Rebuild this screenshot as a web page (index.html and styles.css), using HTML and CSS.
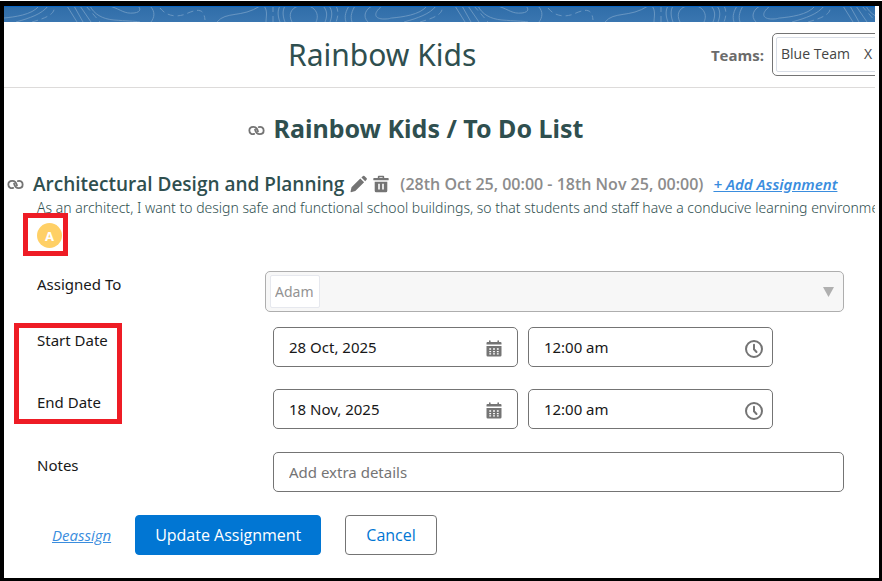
FILE: index.html
```html
<!DOCTYPE html>
<html lang="en">
<head>
<meta charset="utf-8">
<title>Rainbow Kids / To Do List</title>
<link rel="stylesheet" href="styles.css">
</head>
<body>
<svg width="0" height="0" class="defs" aria-hidden="true">
  <symbol id="link" viewBox="0 0 18 12">
    <g fill="none" stroke="#747474" stroke-width="2" stroke-linecap="round">
      <path d="M6.500 9.800C3.500 10.600 1.200 8.800 1.200 6 1.200 3.500 3 2 5.500 2 8.300 2 9.800 3.800 10.600 7"/>
      <path d="M11.500 2.200C14.500 1.400 16.800 3.200 16.800 6 16.800 8.500 15 10 12.500 10 9.700 10 8.200 8.200 7.400 5"/>
    </g>
  </symbol>
  <symbol id="pencil" viewBox="0 0 18 18">
    <path fill="#747474" d="M1.500 12.300 10.300 3.500 14.100 7.300 5.300 16.100 1 17.200Q.5 17.200.6 16.600ZM11.400 2.400 13 .9Q13.700.4 14.400.9L16.700 3.200Q17.200 3.900 16.700 4.600L15.200 6.200Z"/>
  </symbol>
  <symbol id="trash" viewBox="0 0 16 18">
    <path fill="#747474" fill-rule="evenodd" d="M1 3h3.800V1.800Q4.800.8 5.800.8h4.400q1 0 1 1V3H15q.7 0 .7.7v1q0 .6-.7.6H1q-.7 0-.7-.6v-1Q.3 3 1 3ZM6.400 2.300V3h3.200v-.7ZM1.700 6.700h12.600v9q0 1.500-1.500 1.500H3.200q-1.500 0-1.500-1.500ZM5.200 8.800v5.600h1.600V8.800ZM9.200 8.800v5.600h1.600V8.800Z"/>
  </symbol>
  <symbol id="calendar" viewBox="0 0 16 17">
    <path fill="#747474" fill-rule="evenodd" d="M1.500 2H3V1Q3 .3 3.800.3T4.600 1v1h6.800V1q0-.7.8-.7T13 1v1h1.500q1 0 1 1v1.500H.5V3q0-1 1-1ZM.5 5.900h15v9.300q0 1.300-1.300 1.300H1.800Q.5 16.500.5 15.200ZM3.300 8.300v1.500h1.800V8.300Zm3.800 0v1.500h1.800V8.300Zm3.800 0v1.500h1.800V8.300Zm-7.600 2.600v1.300h1.800v-1.300Zm3.800 0v1.300h1.800v-1.300Zm3.800 0v1.300h1.800v-1.300Zm-7.600 2.400v1.300h1.800v-1.300Zm3.800 0v1.300h1.800v-1.300Zm3.800 0v1.300h1.800v-1.300Z"/>
  </symbol>
  <symbol id="clock" viewBox="0 0 18 18">
    <circle cx="9" cy="9" r="8" fill="none" stroke="#747474" stroke-width="2"/>
    <path d="M9 4.800V9.300L11.500 12" fill="none" stroke="#747474" stroke-width="2" stroke-linecap="round"/>
  </symbol>
</svg>

<div class="frame">
  <svg class="banner" aria-hidden="true">
    <defs>
      <linearGradient id="sky" x1="0" y1="0" x2="0" y2="1">
        <stop offset="0" stop-color="#2f6da8"/><stop offset="1" stop-color="#3a76b0"/>
      </linearGradient>
      <pattern id="topo" width="388" height="16" patternUnits="userSpaceOnUse">
        <g fill="none" stroke="#6795c1" stroke-width="1">
          <path d="M0 12C10 11 28 9 35 0M12 16C26 12 38 8 44 0M63 0 73 16M70 0 79 16M76 0 87 16M86 0C90 8 98 13 110 14S130 15 136 16M106 0C118 4 120 8 130 7 138 6 136 2 134 0M146 0C152 6 150 12 147 16M213 16C222 5 238 12 256 0M260 0C264 5 262 11 262 16M276 0C273 5 274 11 276 16M281 0C278 5 279 11 281 16M288 16C280 0 302-5 310 3 314 7 314 12 312 16M319 0C324 5 323 11 321 16M325 0C329 5 328 11 326 16M364 16C358 10 362 3 368 0M378 0C368 8 371 13 380 13 386 13 386 12 388 12"/>
          <path stroke-dasharray="6 4" d="M28 16C42 12 52 8 50 0M82 0 96 16M156 2C164 12 176 11 184 7 196 2 200 4 201 14M269 0V16M332 0C335 5 334 11 332 16"/>
          <path d="M342 16C340 10 342 5 345 0M348 16C346 10 348 5 351 0"/>
        </g>
      </pattern>
    </defs>
    <rect width="100%" height="100%" fill="url(#sky)"/>
    <rect width="100%" height="100%" fill="url(#topo)"/>
    <rect width="100%" height="1" fill="#0866c6"/>
  </svg>

  <header class="header">
    <h1 class="site-title">Rainbow Kids</h1>
    <div class="teams">
      <span class="teams-label">Teams:</span>
      <div class="teams-box">
        <div class="team-chip">Blue Team <button type="button" class="chip-remove" aria-label="Remove Blue Team">X</button></div>
      </div>
    </div>
  </header>

  <main class="main">
    <h2 class="page-title"><svg class="icon-link"><use href="#link"/></svg>Rainbow Kids / To Do List</h2>

    <section class="task">
      <div class="task-head">
        <svg class="icon-link"><use href="#link"/></svg>
        <h3 class="task-title">Architectural Design and Planning</h3>
        <button type="button" class="icon-button" aria-label="Edit"><svg width="18" height="18"><use href="#pencil"/></svg></button>
        <button type="button" class="icon-button" aria-label="Delete"><svg width="16" height="18"><use href="#trash"/></svg></button>
        <span class="task-dates">(28th Oct 25, 00:00 - 18th Nov 25, 00:00)</span>
        <a class="add-link" href="#">+ Add Assignment</a>
      </div>
      <p class="task-text">As an architect, I want to design safe and functional school buildings, so that students and staff have a conducive learning environment.</p>
      <div class="assignee"><span class="avatar">A</span><span class="mark mark-avatar"></span></div>
    </section>

    <form class="form">
      <div class="row row-assigned">
        <label for="assigned">Assigned To</label>
        <div class="picker">
          <span class="picker-chip"></span>
          <select id="assigned" disabled><option>Adam</option></select>
          <svg class="picker-arrow" viewBox="0 0 11 10"><path d="M0 0H11L5.500 10Z" fill="#b0b0b0"/></svg>
        </div>
      </div>
      <div class="dates">
        <div class="row">
          <label for="start">Start Date</label>
          <div class="pair">
            <div class="field"><input id="start" type="text" value="28 Oct, 2025"><svg width="16" height="17"><use href="#calendar"/></svg></div>
            <div class="field"><input type="text" value="12:00 am" aria-label="Start time"><svg width="18" height="18"><use href="#clock"/></svg></div>
          </div>
        </div>
        <div class="row">
          <label for="end">End Date</label>
          <div class="pair">
            <div class="field"><input id="end" type="text" value="18 Nov, 2025"><svg width="16" height="17"><use href="#calendar"/></svg></div>
            <div class="field"><input type="text" value="12:00 am" aria-label="End time"><svg width="18" height="18"><use href="#clock"/></svg></div>
          </div>
        </div>
        <span class="mark mark-dates"></span>
      </div>
      <div class="row">
        <label for="notes">Notes</label>
        <div class="field"><input id="notes" type="text" placeholder="Add extra details"></div>
      </div>
      <div class="actions">
        <a class="deassign" href="#">Deassign</a>
        <button type="button" class="button primary">Update Assignment</button>
        <button type="button" class="button">Cancel</button>
      </div>
    </form>
  </main>
</div>
</body>
</html>
```

FILE: styles.css
```css
* { box-sizing: border-box; }

body {
  margin: 0;
  padding-top: 1px;
  background: #fff;
  font: 15px/20px "Noto Sans", "Open Sans", sans-serif;
  color: #181818;
}

button, input, select { font: inherit; color: inherit; margin: 0; }
h1, h2, h3, p { margin: 0; }
.defs { position: absolute; }

.frame {
  min-height: calc(100vh - 1px);
  padding-right: 4px;
  border: solid #000;
  border-width: 5px 3px 3px 4px;
  overflow: hidden;
}

.banner { display: block; width: 100%; height: 16px; }

.header {
  display: flex;
  align-items: center;
  height: 66px;
  padding-left: 284px;
  border-bottom: 1px solid #dddbda;
  overflow: hidden;
}

.site-title { font-size: 30px; line-height: 40px; font-weight: 400; color: #2f4f4f; white-space: nowrap; }

.teams { display: flex; align-items: center; gap: 8px; margin-left: auto; margin-right: -16px; }
.teams-label { font-family: "Open Sans", sans-serif; font-weight: 700; color: #6b6b6b; }
.teams-box { width: 119px; padding: 3px; border: 1px solid #747474; border-radius: 5px; }
.team-chip {
  display: flex;
  justify-content: space-between;
  align-items: center;
  height: 35px;
  padding: 0 14px 2px 4px;
  border: 1px solid #d8dde6;
  border-radius: 2px;
  color: #444;
  font-family: "Open Sans", sans-serif;
  font-size: 14px;
  white-space: nowrap;
}
.chip-remove { padding: 0; border: 0; background: none; }

.main { padding-right: 31px; }

.icon-link { flex: none; width: 17px; height: 11px; }

.page-title {
  display: flex;
  align-items: center;
  justify-content: center;
  gap: 9px;
  margin: 22px 17px 0 0;
  font-size: 25px;
  line-height: 36px;
  font-weight: 700;
  color: #2f4f4f;
}
.page-title .icon-link { margin-top: 4px; }

.task { margin-top: 24px; }
.task-head { display: flex; align-items: center; height: 28px; padding-left: 3px; white-space: nowrap; }
.task-title { margin: 0 6px 0 9px; font-family: "Open Sans", sans-serif; font-size: 19px; line-height: 28px; font-weight: 600; color: #2f4f4f; }
.icon-button { display: flex; margin-right: 5px; padding: 0; border: 0; background: none; }
.task-dates { margin-left: 6px; font-family: "Open Sans", sans-serif; font-size: 16px; font-weight: 600; color: #8c8c8c; }
.add-link { margin-left: 10px; font-weight: 600; font-style: italic; color: #3a8dde; }
.task-text {
  margin-right: -31px;
  padding-left: 33px;
  overflow: hidden;
  font-size: 14px;
  font-weight: 300;
  color: #2f4f4f;
  white-space: nowrap;
}

.assignee { position: relative; padding: 5px 0 0 33px; }
.avatar {
  display: grid;
  place-items: center;
  width: 25px;
  height: 25px;
  border-radius: 50%;
  background: #ffd066;
  color: #fff;
  font-size: 13px;
  font-weight: 700;
}
.mark { position: absolute; border: 5px solid #ee1c25; pointer-events: none; }
.mark-avatar { left: 19px; top: -5px; width: 45px; height: 43px; }
.mark-dates { left: 10px; top: -4px; width: 108px; height: 101px; }

.form { display: flex; flex-direction: column; gap: 23px; margin-top: 23px; }
.row { display: grid; grid-template-columns: 236px 1fr; padding-left: 33px; }
.row > label { padding-top: 3px; }
.row-assigned { grid-template-columns: 228px 1fr; margin-bottom: -8px; }
.dates { position: relative; display: grid; gap: 22px; }

.picker {
  display: grid;
  align-items: center;
  height: 41px;
  padding: 0 9px 0 4px;
  border: 1px solid #aeaeae;
  border-radius: 5px;
  background: #f7f7f7;
}
.picker > * { grid-area: 1 / 1; }
.picker-chip { width: 50px; height: 33px; border: 1px solid #e6e8ee; border-radius: 2px; background: #fff; }
.picker select { width: 100%; padding: 0 5px; border: 0; appearance: none; background: none; color: #939393; font-size: 14px; opacity: 1; }
.picker-arrow { justify-self: end; width: 11px; height: 10px; }

.pair { display: grid; grid-template-columns: minmax(0, 4fr) minmax(0, 4fr) minmax(0, 1fr); gap: 10px; }
.field {
  display: flex;
  align-items: center;
  height: 40px;
  padding: 0 9px 0 15px;
  border: 1px solid #747474;
  border-radius: 5px;
  background: #fff;
}
.field input { flex: 1; min-width: 0; padding: 0; border: 0; outline: 0; background: none; }
.field input::placeholder { color: #747474; opacity: 1; }
.field svg { margin-top: 3px; }
.pair .field:first-child { padding-right: 15px; }

.actions { display: flex; align-items: center; padding-left: 48px; }
.deassign { margin-right: 24px; font-family: "Open Sans", sans-serif; font-style: italic; color: #3a8dde; }
.button {
  height: 40px;
  padding: 0 20px;
  border: 1px solid #747474;
  border-radius: 4px;
  background: #fff;
  color: #0176d3;
  font-family: "Open Sans", sans-serif;
  font-size: 16px;
}
.button.primary { margin-right: 24px; padding: 0 19px; border-color: #0176d3; background: #0176d3; color: #fff; }
```
